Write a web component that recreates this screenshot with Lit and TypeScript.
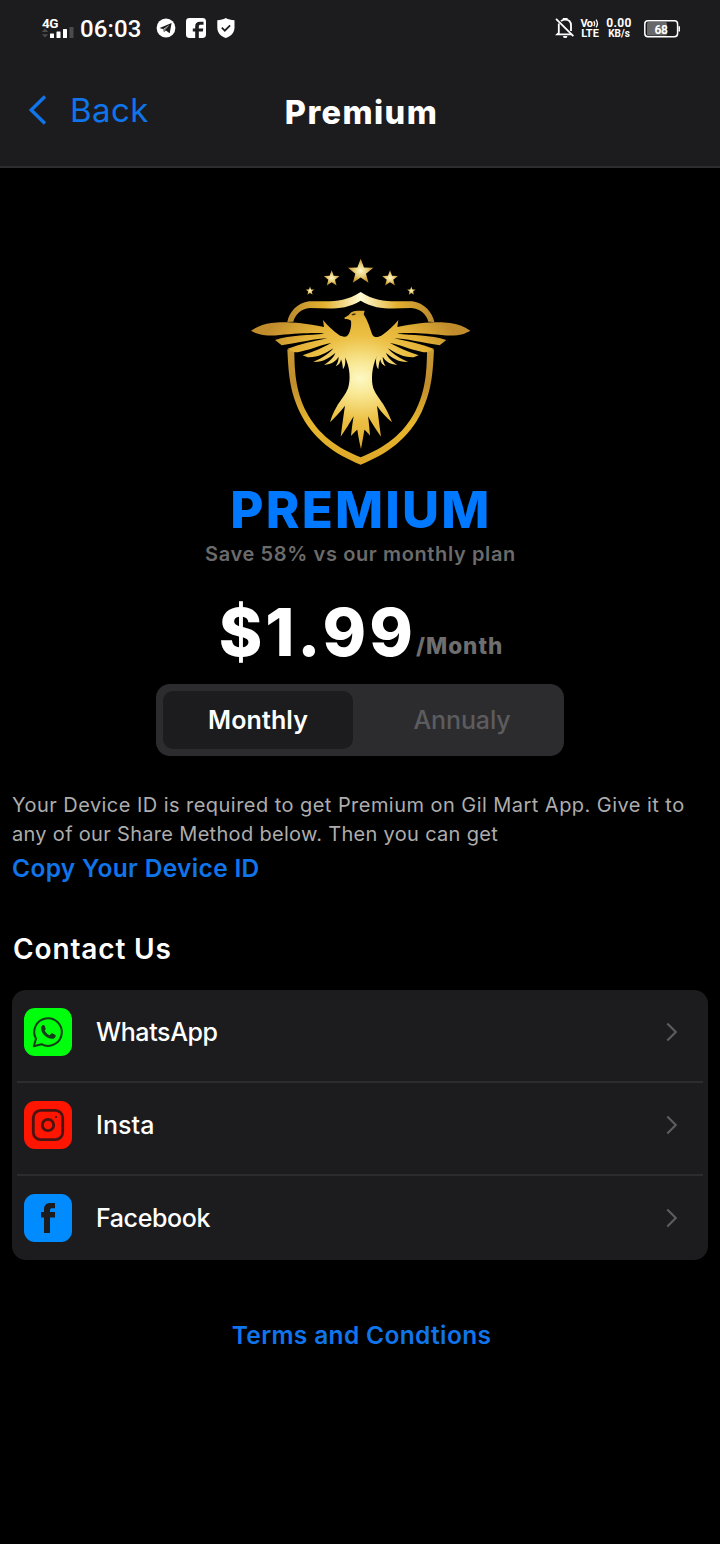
import { LitElement, html, css, svg } from "lit";
import { customElement, property, state } from "lit/decorators.js";
import { classMap } from "lit/directives/class-map.js";

@customElement("status-bar")
export class StatusBar extends LitElement {
  static styles = css`
    :host {
      display: flex;
      align-items: flex-start;
      justify-content: space-between;
      box-sizing: border-box;
      height: 56px;
      padding: 17px 39px 0 41px;
      font-family: Roboto, "Noto Sans", sans-serif;
      color: #fff;
    }
    svg { display: block; }
    .left, .right { display: flex; align-items: flex-start; }
    .signal { display: flex; flex-direction: column; width: 34px; }
    .net { font-size: 13.5px; font-weight: 700; line-height: 13px; letter-spacing: -0.4px; height: 10px; padding-left: 1px; }
    .time { font-size: 24px; font-weight: 500; line-height: 24px; letter-spacing: 0.15px; margin-left: 5px; width: 76px; }
    .apps { display: flex; gap: 10px; }
    .stack { display: flex; flex-direction: column; align-items: center; font-weight: 700; white-space: nowrap; }
    .volte { width: 20px; margin-left: 5px; font-size: 11px; line-height: 10px; }
    .volte .top { display: flex; align-items: flex-start; font-size: 11px; letter-spacing: -0.5px; height: 10px; padding-top: 2px; box-sizing: border-box; }
    .volte .low { padding-top: 2px; }
    .speed { width: 28px; margin-left: 5px; }
    .speed .top { font-size: 12px; line-height: 12px; letter-spacing: 0.3px; }
    .speed .low { font-size: 10px; line-height: 10px; }
    .battery { position: relative; margin-left: 11px; margin-top: 2px; }
    .level { position: absolute; left: 0; top: 1px; width: 34px; text-align: center; font-size: 12px; font-weight: 700; line-height: 20px; letter-spacing: -0.3px; }
  `;
  render() {
    return html`
      <div class="left">
        <div class="signal">
          <span class="net">4G</span>
          <svg width="34" height="12" viewBox="0 0 34 12">
            <path d="M4 1.500 7.200 5H.8zM4 10.500.8 7.200h6.400z" fill="#4b4b4d" />
            <rect x="9" y="6.500" width="4" height="4.500" rx=".6" fill="#fff" />
            <rect x="15.500" y="4.500" width="4" height="6.500" rx=".6" fill="#fff" />
            <rect x="22" y="2" width="4" height="9" rx=".6" fill="#fff" />
            <rect x="28.500" y="0" width="4" height="11" rx=".6" fill="#4b4b4d" />
          </svg>
        </div>
        <span class="time">06:03</span>
        <div class="apps">
          <svg width="20" height="22" viewBox="0 0 20 22">
            <circle cx="10" cy="11" r="9.400" fill="#fff" />
            <path d="M3.600 10.900 15.600 6.100 13.700 16.200 9.800 13.400 7.900 15.300 7.300 12.300z" fill="#1c1c1e" />
            <path d="M7.500 12.100 13.300 8 9.200 12.900 8 15z" fill="#fff" />
            <path d="m8.300 12.600 4.800-4.300-4 4.800-1 1.300z" fill="#1c1c1e" />
          </svg>
          <svg width="20" height="22" viewBox="0 0 20 22">
            <rect x="0" y="1" width="20" height="20" rx="3.400" fill="#fff" />
            <path d="M9.200 21v-6.400H6.800v-3h2.400V9.400c0-3 1.700-4.600 4.600-4.600h3.700v2.900h-2.700c-1.400 0-2 .6-2 2v1.900h4.500l-.5 3h-4V21z" fill="#1c1c1e" />
          </svg>
          <svg width="20" height="22" viewBox="0 0 20 22">
            <path d="M9.800 1c2.500 1.400 5.200 2.100 8.700 2.200v7.300c0 5-3.300 8.700-8.700 10.500-5.400-1.800-8.500-5.500-8.500-10.500V3.200C4.700 3.100 7.300 2.400 9.800 1z" fill="#fff" />
            <path d="m5.800 10.700 3 3 5.300-5.400" fill="none" stroke="#1c1c1e" stroke-width="1.700" />
          </svg>
        </div>
      </div>
      <div class="right">
        <svg width="20" height="22" viewBox="0 0 20 22">
          <path d="M3.800 6.500v9.300L2.200 17.400h14.500M6 4.100C7 3.200 8.500 2.600 10.200 2.600c3.600 0 5.800 2.400 5.800 5.900v5.600M8.700 2.800V1.900h3v.9" fill="none" stroke="#fff" stroke-width="1.800" />
          <path d="M1 1.900 18.400 19.200" stroke="#fff" stroke-width="1.800" />
          <path d="M8 18.900h4.400a2.200 2.200 0 0 1-4.400 0z" fill="#fff" />
        </svg>
        <div class="stack volte">
          <span class="top">Vo<svg width="7" height="9" viewBox="0 0 7 9"><path d="M.8 2.200q1.700 2.500 0 5M3 .6q2.900 3.900 0 7.800" fill="none" stroke="#fff" stroke-width="1.300" /></svg></span>
          <span class="low">LTE</span>
        </div>
        <div class="stack speed">
          <span class="top">0.00</span>
          <span class="low">KB/s</span>
        </div>
        <div class="battery">
          <svg width="37" height="20" viewBox="0 0 37 20">
            <rect x="3" y="3" width="20" height="13.500" rx="1.500" fill="#68686a" />
            <rect x=".8" y="1.800" width="32.800" height="16" rx="3.200" fill="none" stroke="#fff" stroke-width="1.500" />
            <path d="M35.200 7.200v5.200" stroke="#fff" stroke-width="1.500" />
          </svg>
          <span class="level">68</span>
        </div>
      </div>
    `;
  }
}

@customElement("nav-header")
export class NavHeader extends LitElement {
  static styles = css`
    :host {
      display: grid;
      grid-template-columns: 1fr auto 1fr;
      box-sizing: border-box;
      height: 112px;
      border-bottom: 2px solid #2d2d2f;
    }
    .back { display: flex; align-items: flex-start; color: #1074ea; padding-left: 28px; }
    .back svg { display: block; margin-top: 38px; }
    .label { margin-left: 22px; margin-top: 34px; font-size: 33px; line-height: 40px; letter-spacing: 0.4px; }
    .title { margin-top: 37px; padding-left: 3px; font-size: 32.5px; line-height: 40px; font-weight: 800; letter-spacing: 1.4px; color: #fff; }
  `;
  render() {
    return html`
      <div class="back">
        <svg width="20" height="32" viewBox="0 0 20 32">
          <path d="M17 2.500 3.200 16 17 29.500" fill="none" stroke="currentColor" stroke-width="3.400" />
        </svg>
        <span class="label">Back</span>
      </div>
      <div class="title">Premium</div>
      <div></div>
    `;
  }
}

const leftWing = svg`
  <path d="M33 242C52 230 72 221 94 219C125 215 175 215 252 231L249 210C262 226 278 241 297 255C308 263 316 263 322 260L345 300V350L330 356C326 340 320 322 315 318C316 330 318 345 309 358C308 345 306 335 303 328C302 338 297 345 287 349C294 338 296 328 296 320C288 333 276 342 252 345C270 334 282 320 286 309C266 324 250 337 220 336C248 324 270 308 280 295C256 310 234 323 203 322L188 316C224 304 252 291 274 279C242 284 220 297 180 305C166 308 152 308 143 296C180 282 220 274 262 265C232 265 170 279 125 286L105 270C150 254 212 256 252 251C232 247 170 251 120 255C70 260 50 252 33 242Z" />
`;

@customElement("eagle-emblem")
export class EagleEmblem extends LitElement {
  static styles = css`
    :host { display: block; }
    svg { display: block; }
  `;
  private star(cx: number, cy: number, r: number) {
    const pts = Array.from({ length: 10 }, (_, i) => {
      const a = -Math.PI / 2 + (i * Math.PI) / 5;
      const q = i % 2 ? r * 0.42 : r;
      return `${(cx + q * Math.cos(a)).toFixed(1)},${(cy + q * Math.sin(a)).toFixed(1)}`;
    }).join(" ");
    return svg`<polygon points=${pts} fill="url(#star)" />`;
  }
  render() {
    return html`
      <svg width="240" height="225" viewBox="0 0 720 675">
        <defs>
          <radialGradient id="bird" gradientUnits="userSpaceOnUse" cx="362" cy="385" r="330" gradientTransform="translate(362 385) scale(1 .8) translate(-362 -385)">
            <stop offset="0" stop-color="#fdf8c4" />
            <stop offset=".18" stop-color="#f9e996" />
            <stop offset=".48" stop-color="#ecc044" />
            <stop offset=".68" stop-color="#e3b236" />
            <stop offset="1" stop-color="#c18c2c" />
          </radialGradient>
          <linearGradient id="crest" gradientUnits="userSpaceOnUse" x1="143" y1="0" x2="582" y2="0">
            <stop offset="0" stop-color="#b98a30" />
            <stop offset=".25" stop-color="#e3b02e" />
            <stop offset=".5" stop-color="#fffbd4" />
            <stop offset=".75" stop-color="#e3b02e" />
            <stop offset="1" stop-color="#b98a30" />
          </linearGradient>
          <linearGradient id="shield" gradientUnits="userSpaceOnUse" x1="0" y1="298" x2="0" y2="643">
            <stop offset="0" stop-color="#c99a35" />
            <stop offset=".3" stop-color="#c08c2c" />
            <stop offset=".65" stop-color="#e8b72d" />
            <stop offset="1" stop-color="#dda829" />
          </linearGradient>
          <radialGradient id="star">
            <stop offset="0" stop-color="#fff8c8" />
            <stop offset=".5" stop-color="#e6cd78" />
            <stop offset="1" stop-color="#c58d22" />
          </radialGradient>
        </defs>
        ${this.star(362, 66, 40)} ${this.star(275, 86, 25)} ${this.star(450, 86, 25)}
        ${this.star(210, 123, 13.5)} ${this.star(514, 123, 13.5)}
        <path d="M142 216C146 188 172 158 207 154C255 151 304 164 362 126C420 164 470 151 517 154C552 158 578 188 583 216L565 215C560 194 542 176 514 174C465 174 415 184 362 152C310 184 258 174 210 174C182 176 166 194 160 215Z" fill="url(#crest)" />
        <path d="M142 298C146 380 150 420 178 484C218 568 286 614 362 644C438 614 506 568 546 484C574 420 578 380 582 298L561 307C560 386 552 430 526 484C490 554 432 594 362 622C292 594 234 554 198 484C172 430 164 386 163 307Z" fill="url(#shield)" />
        <g fill="url(#bird)">
          ${leftWing}
          <g transform="translate(724 0) scale(-1 1)">${leftWing}</g>
          <path d="M312 204C319 199 325 198 329 192C336 181 350 182 374 182L371 193C384 214 389 232 396 252C400 262 408 264 424 258L410 320C395 352 393 390 400 415C408 436 424 452 434 470C444 486 450 502 456 517C440 502 424 488 411 467C415 500 419 530 423 560C408 540 396 520 384 499C387 520 389 540 390 557C384 549 378 542 373 539C370 560 366 580 363 597C359 580 355 560 352 539C347 542 341 550 333 558C335 540 337 520 341 499C329 520 316 540 302 560C306 530 310 500 315 467C300 488 284 502 270 517C275 500 280 486 290 470C300 452 316 436 324 415C332 390 331 352 314 320L302 257C316 264 325 260 330 242C334 230 334 222 333 212C326 209 322 205 317 208Z" />
        </g>
        <path d="M334 194C338 190 344 190 348 192C344 196 338 197 334 194Z" fill="#3a2a08" />
      </svg>
    `;
  }
}

type Icon = "whatsapp" | "insta" | "facebook";

@customElement("contact-row")
export class ContactRow extends LitElement {
  @property() label = "";
  @property() icon: Icon = "whatsapp";
  static styles = css`
    :host { display: flex; align-items: center; height: 48px; padding: 18px 12px 0; }
    svg { display: block; flex: none; }
    .label { flex: 1; margin-left: 24px; font-size: 25px; line-height: 36px; font-weight: 500; letter-spacing: -0.38px; }
    .label.insta { letter-spacing: 0.1px; }
    .chevron { margin-right: 18px; }
  `;
  private glyph() {
    switch (this.icon) {
      case "whatsapp":
        return svg`
          <rect width="48" height="48" rx="11" fill="#00ff0c" />
          <path d="M9.800 38.200 12 30.800A13.800 13.800 0 1 1 17.500 36.200Z" fill="none" stroke="#123d16" stroke-width="2" stroke-linejoin="round" />
          <path d="M18.200 17.500c1.200-.9 2.400-.3 2.800 1l.6 2c.2.800-.2 1.300-.9 2 1 2.200 2.600 3.800 5 4.700l1.300-1.400c.5-.5 1-.6 1.600-.3l2.500 1.300c.8.5.8 1.200.3 2.100-1 1.800-3 2.300-5.300 1.600-4.600-1.300-7.900-4.700-8.900-8.800-.400-1.700 0-3.300 1-4.200z" fill="#123d16" />`;
      case "insta":
        return svg`
          <rect width="48" height="48" rx="11" fill="#ff1500" />
          <rect x="9.300" y="9.300" width="29.400" height="29.400" rx="7.500" fill="none" stroke="#481412" stroke-width="2.800" />
          <circle cx="24" cy="24" r="5.700" fill="none" stroke="#481412" stroke-width="2.800" />
          <circle cx="32" cy="16" r="1.100" fill="#481412" />`;
      case "facebook":
        return svg`
          <rect width="48" height="48" rx="11" fill="#008cff" />
          <path d="M20 39V23.600H17V18H20V15.500C20 11 22.500 9 26.500 9H31V14.200H28.300C26.700 14.200 26 14.800 26 16.200V18H31V23.600H26V39Z" fill="#1c1c1e" />`;
    }
  }
  render() {
    return html`
      <svg width="48" height="48" viewBox="0 0 48 48">${this.glyph()}</svg>
      <span class=${classMap({ label: true, insta: this.icon === "insta" })}>${this.label}</span>
      <svg class="chevron" width="12" height="20" viewBox="0 0 12 20">
        <path d="M1.300 1.500 9.800 10 1.300 18.500" fill="none" stroke="#5d5d5f" stroke-width="2.100" />
      </svg>
    `;
  }
}

@customElement("app-root")
export class AppRoot extends LitElement {
  @state() private plan: "monthly" | "annual" = "monthly";

  static styles = css`
    :host {
      display: block;
      box-sizing: border-box;
      min-height: 1544px;
      background: #000;
      color: #fff;
      font-family: Inter, "Liberation Sans", sans-serif;
    }
    .top { background: #1c1c1e; }
    main { display: flex; flex-direction: column; padding: 82px 12px 0; }
    .hero { display: flex; flex-direction: column; align-items: center; }
    .name { margin-top: 1px; padding-left: 2px; font-size: 51px; line-height: 68px; font-weight: 800; letter-spacing: 2.2px; color: #0078ff; }
    .save { margin-top: -1px; padding-left: 1px; font-size: 20px; line-height: 22px; font-weight: 600; letter-spacing: 0.62px; color: #6b6b6b; }
    .price { display: flex; align-items: baseline; height: 67px; margin: 34px 0 18px; padding-left: 2px; }
    .amount { font-size: 66px; line-height: 67px; font-weight: 800; letter-spacing: 3px; }
    .period { position: relative; top: -2px; font-size: 22.5px; line-height: 28px; font-weight: 800; letter-spacing: 1px; color: #6e6e6e; }
    .segment { display: flex; box-sizing: border-box; width: 408px; height: 72px; padding: 7px; border-radius: 14px; background: #2c2c2e; }
    .tab { flex: 0 0 190px; border: 0; border-radius: 10px; padding: 0; background: none; color: #5c5c5e; font: 500 25px/58px Inter, "Liberation Sans", sans-serif; letter-spacing: -0.1px; text-align: center; }
    .tab + .tab { flex: 1; padding-left: 14px; }
    .tab.on { background: #1c1c1e; color: #fff; font-weight: 600; letter-spacing: 0.1px; }
    .info { margin: 35px 0 0; font-size: 20px; line-height: 29px; color: #adadad; white-space: nowrap; }
    .l1 { letter-spacing: 0.452px; }
    .l2 { letter-spacing: 0.31px; }
    .link { color: #1074ea; font-size: 24.5px; font-weight: 600; text-decoration: none; }
    .copy { line-height: 36px; margin-top: 1px; letter-spacing: 0.34px; }
    h2 { margin: 45px 0 23px; padding-left: 1px; font-size: 28px; line-height: 36px; font-weight: 600; letter-spacing: 0.87px; }
    .card { height: 270px; border-radius: 14px; background: #1c1c1e; }
    .rule { height: 2px; margin: 25px 5px 0; background: #2c2c2e; }
    .terms { align-self: center; margin-top: 58px; padding-left: 3px; line-height: 35px; letter-spacing: 0.35px; }
  `;

  render() {
    const monthly = this.plan === "monthly";
    return html`
      <div class="top">
        <status-bar></status-bar>
        <nav-header></nav-header>
      </div>
      <main>
        <section class="hero">
          <eagle-emblem></eagle-emblem>
          <div class="name">PREMIUM</div>
          <div class="save">Save 58% vs our monthly plan</div>
          <div class="price"><span class="amount">$1.99</span><span class="period">/Month</span></div>
          <div class="segment">
            <button class=${classMap({ tab: true, on: monthly })} @click=${() => (this.plan = "monthly")}>Monthly</button>
            <button class=${classMap({ tab: true, on: !monthly })} @click=${() => (this.plan = "annual")}>Annualy</button>
          </div>
        </section>
        <p class="info">
          <span class="l1">Your Device ID is required to get Premium on Gil Mart App. Give it to</span><br />
          <span class="l2">any of our Share Method below. Then you can get</span>
        </p>
        <a class="link copy">Copy Your Device ID</a>
        <h2>Contact Us</h2>
        <section class="card">
          <contact-row icon="whatsapp" label="WhatsApp"></contact-row>
          <div class="rule"></div>
          <contact-row icon="insta" label="Insta"></contact-row>
          <div class="rule"></div>
          <contact-row icon="facebook" label="Facebook"></contact-row>
        </section>
        <a class="link terms">Terms and Condtions</a>
      </main>
    `;
  }
}
